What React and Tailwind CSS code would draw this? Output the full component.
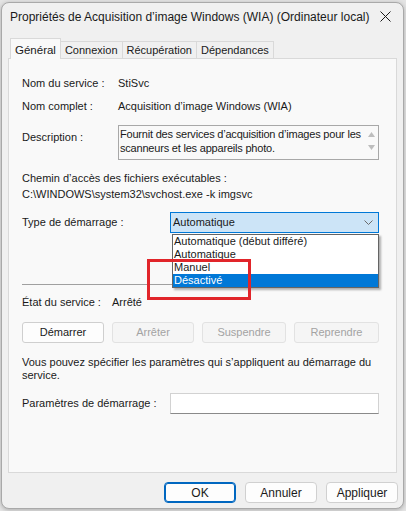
import React from 'react';

const ui = { fontFamily: '"Liberation Sans", Arial, sans-serif' };

function Tab({ label, active }) {
  if (active) {
    return (
      <div className="relative z-10 -mb-px h-[21px] px-[4px] flex items-start pt-[3px] bg-[#f9f9f9] border border-b-0 border-[#d9d9d9] text-[11.5px] text-[#1a1a1a]">
        {label}
      </div>
    );
  }
  return (
    <div className="h-[17px] px-[4px] -ml-px flex items-center bg-[#f0f0f0] border border-b-0 border-[#d9d9d9] text-[11px] text-[#1a1a1a]">
      {label}
    </div>
  );
}

function Btn({ children, disabled, w = 'w-[83px]' }) {
  return (
    <div
      className={`${w} h-[21px] flex items-center justify-center rounded-[3px] border text-[11px] ${
        disabled ? 'bg-[#f5f5f5] border-[#e2e2e2] text-[#a3a3a3]' : 'bg-[#fdfdfd] border-[#cfcfcf] text-[#1a1a1a]'
      }`}
    >
      {children}
    </div>
  );
}

export default function App() {
  return (
    <div className="relative w-[406px] h-[511px] bg-[#e4e4e4] pt-[2px] pl-[1px] pr-[2px] pb-[2px] overflow-hidden" style={ui}>
      <div className="h-[507px] flex flex-col rounded-[8px] border border-[#a9a9a9] bg-[#f0f0f0] shadow-[0_1px_4px_rgba(0,0,0,0.25)]">
        {/* barre de titre */}
        <div className="h-[27px] flex items-center justify-between pl-[8px] pr-[12px] text-[12px] text-[#1a1a1a]">
          <span>Propriétés de Acquisition d’image Windows (WIA) (Ordinateur local)</span>
          <svg width="11" height="11" viewBox="0 0 11 11">
            <path d="M0.5 0.5 L10.5 10.5 M10.5 0.5 L0.5 10.5" stroke="#1a1a1a" strokeWidth="1" />
          </svg>
        </div>

        {/* onglets */}
        <div className="ml-[8px] mt-[8px] flex items-end">
          <Tab label="Général" active />
          <Tab label="Connexion" />
          <Tab label="Récupération" />
          <Tab label="Dépendances" />
        </div>

        {/* panneau */}
        <div className="ml-[6px] mr-[6px] h-[415px] bg-[#f9f9f9] border border-[#d9d9d9] pl-[13px] pr-[17px] text-[11px] text-[#1a1a1a]">
          <div className="mt-[16px] h-[16px] flex items-center">
            <span className="w-[96px]">Nom du service :</span>
            <span>StiSvc</span>
          </div>
          <div className="mt-[7px] h-[16px] flex items-center">
            <span className="w-[96px]">Nom complet :</span>
            <span>Acquisition d’image Windows (WIA)</span>
          </div>
          <div className="mt-[11px] flex items-start">
            <span className="w-[96px] pt-[5px] leading-[14px]">Description :</span>
            <div className="flex-1 h-[35px] border border-[#a8a8a8] bg-[#f9f9f9] flex pl-[1px] pt-[1px] overflow-hidden">
              <p className="flex-1 leading-[14px] whitespace-nowrap tracking-[-0.2px]">
                Fournit des services d’acquisition d’images pour les<br />scanneurs et les appareils photo.
              </p>
              <div className="w-[14px] flex flex-col items-center pt-[5px] gap-[8px]">
                <svg width="7" height="5" viewBox="0 0 7 5"><path d="M3.5 0 L7 5 L0 5 Z" fill="#bdbdbd" /></svg>
                <svg width="7" height="5" viewBox="0 0 7 5"><path d="M0 0 L7 0 L3.5 5 Z" fill="#bdbdbd" /></svg>
              </div>
            </div>
          </div>
          <div className="mt-[10px] leading-[16px]">
            <div>Chemin d’accès des fichiers exécutables :</div>
            <div>C:\WINDOWS\system32\svchost.exe -k imgsvc</div>
          </div>

          <div className="mt-[10px] flex items-center">
            <span className="w-[148px]">Type de démarrage :</span>
            <div className="relative flex-1">
              <div className="h-[21px] flex items-center justify-between pl-[2px] pr-[5px] bg-[#cce4f7] border border-[#0078d7]">
                <span>Automatique</span>
                <svg width="9" height="5" viewBox="0 0 9 5">
                  <path d="M0.5 0.5 L4.5 4.5 L8.5 0.5" fill="none" stroke="#6a6a6a" strokeWidth="1" />
                </svg>
              </div>
              <div className="absolute z-20 left-[2px] right-0 top-[22px] bg-white border border-[#646464] shadow-[2px_2px_2px_rgba(0,0,0,0.3)] leading-[13px]">
                <div className="pl-px">Automatique (début différé)</div>
                <div className="pl-px">Automatique</div>
                <div className="pl-px">Manuel</div>
                <div className="pl-px bg-[#0078d7] text-white">Désactivé</div>
              </div>
            </div>
          </div>

          <div className="mt-[51px] h-px bg-[#a0a0a0]" />

          <div className="mt-[9px] h-[16px] flex items-center">
            <span className="w-[90px]">État du service :</span>
            <span>Arrêté</span>
          </div>

          <div className="mt-[12px] flex gap-[8px]">
            <Btn>Démarrer</Btn>
            <Btn disabled>Arrêter</Btn>
            <Btn disabled w="w-[85px]">Suspendre</Btn>
            <Btn disabled w="w-[86px]">Reprendre</Btn>
          </div>

          <p className="mt-[13px] leading-[13px]">
            Vous pouvez spécifier les paramètres qui s’appliquent au démarrage du<br />service.
          </p>

          <div className="mt-[11px] flex items-center">
            <span className="w-[148px]">Paramètres de démarrage :</span>
            <div className="flex-1 h-[21px] bg-white border border-[#d2d2d2] border-b-[#8a8a8a]" />
          </div>
        </div>

        {/* boutons du bas */}
        <div className="mt-[9px] pr-[5px] flex justify-end gap-[9px] text-[12px] text-[#1a1a1a]">
          <div className="w-[72px] h-[21px] flex items-center justify-center rounded-[4px] bg-[#fdfdfd] border border-[#0067c0] shadow-[inset_0_0_0_1px_#0067c0]">OK</div>
          <div className="w-[72px] h-[21px] flex items-center justify-center rounded-[4px] bg-[#fdfdfd] border border-[#d0d0d0]">Annuler</div>
          <div className="w-[72px] h-[21px] flex items-center justify-center rounded-[4px] bg-[#fdfdfd] border border-[#d0d0d0]">Appliquer</div>
        </div>
      </div>

      {/* encadré rouge */}
      <div className="absolute z-30 left-[147px] top-[259px] w-[104px] h-[41px] border-[3px] border-[#e1252a]" />
    </div>
  );
}
